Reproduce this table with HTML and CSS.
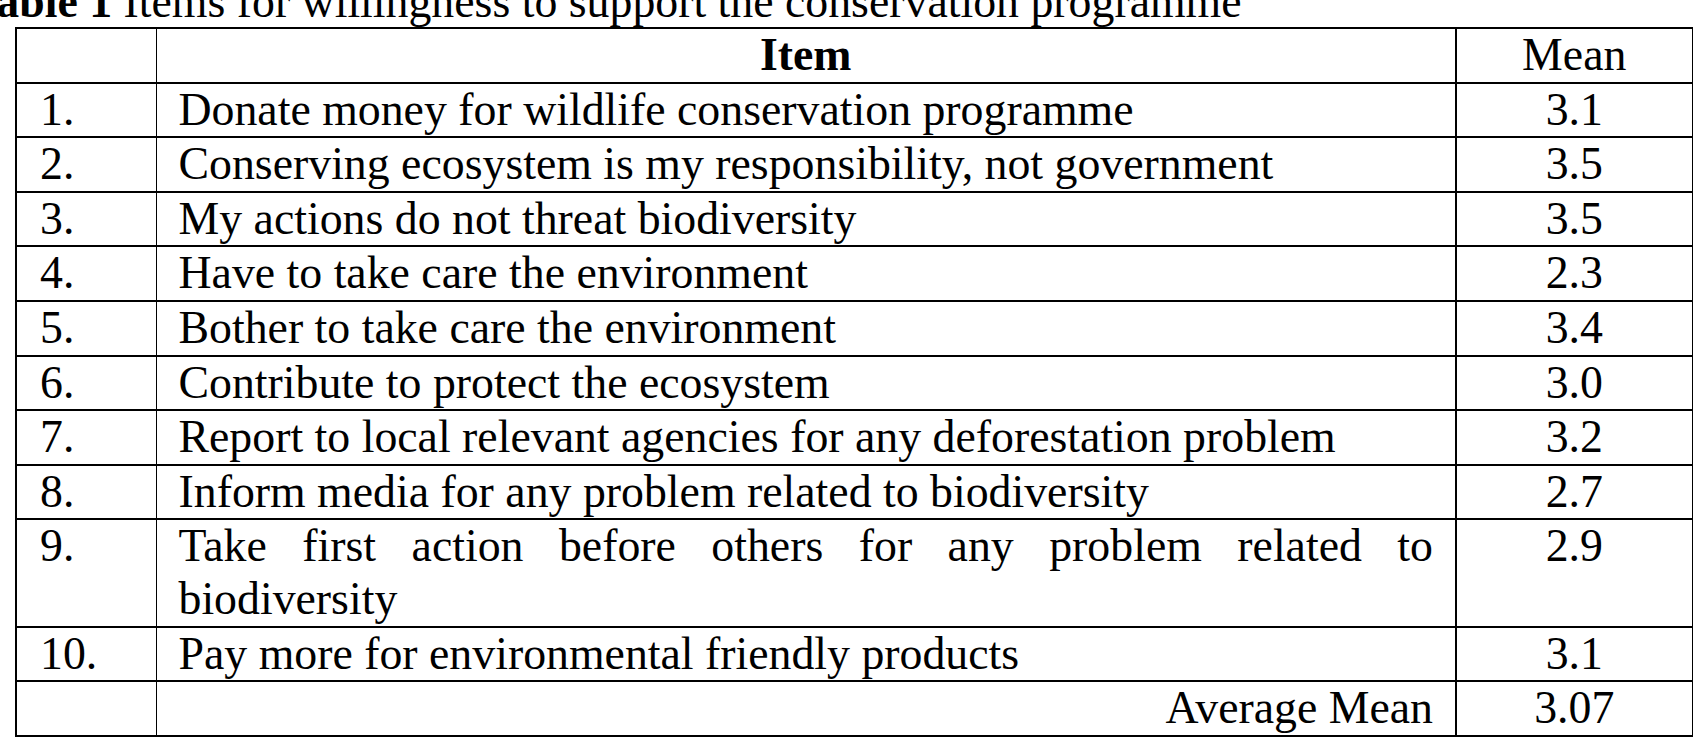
FILE: index.html
```html
<!DOCTYPE html>
<html lang="en">
<head>
<meta charset="utf-8">
<title>Table 1</title>
<link rel="stylesheet" href="styles.css">
</head>
<body>
<div class="caption"><b>Table 1</b> Items for willingness to support the conservation programme</div>
<table class="items">
  <colgroup>
    <col class="c-num">
    <col class="c-item">
    <col class="c-mean">
  </colgroup>
  <tr class="head">
    <td class="num"></td>
    <td class="item center"><b>Item</b></td>
    <td class="mean">Mean</td>
  </tr>
  <tr><td class="num">1.</td><td class="item">Donate money for wildlife conservation programme</td><td class="mean">3.1</td></tr>
  <tr><td class="num">2.</td><td class="item">Conserving ecosystem is my responsibility, not government</td><td class="mean">3.5</td></tr>
  <tr><td class="num">3.</td><td class="item">My actions do not threat biodiversity</td><td class="mean">3.5</td></tr>
  <tr><td class="num">4.</td><td class="item">Have to take care the environment</td><td class="mean">2.3</td></tr>
  <tr><td class="num">5.</td><td class="item">Bother to take care the environment</td><td class="mean">3.4</td></tr>
  <tr><td class="num">6.</td><td class="item">Contribute to protect the ecosystem</td><td class="mean">3.0</td></tr>
  <tr><td class="num">7.</td><td class="item">Report to local relevant agencies for any deforestation problem</td><td class="mean">3.2</td></tr>
  <tr><td class="num">8.</td><td class="item">Inform media for any problem related to biodiversity</td><td class="mean">2.7</td></tr>
  <tr><td class="num">9.</td><td class="item"><span class="justline">Take first action before others for any problem related to</span>biodiversity</td><td class="mean">2.9</td></tr>
  <tr><td class="num">10.</td><td class="item">Pay more for environmental friendly products</td><td class="mean">3.1</td></tr>
  <tr><td class="num"></td><td class="item right">Average Mean</td><td class="mean">3.07</td></tr>
</table>
</body>
</html>
```
FILE: styles.css
```css
html, body {
  margin: 0;
  padding: 0;
  background: #ffffff;
}
body {
  display: flex;
  flex-direction: column;
  align-items: flex-start;
  font-family: "Liberation Serif", "Times New Roman", serif;
  color: #000000;
}
.caption {
  font-size: 45.8px;
  line-height: 26px;
  height: 26px;
  margin-top: -11px;
  margin-left: -30px;
  white-space: nowrap;
}
.items {
  border-collapse: collapse;
  margin-left: 15px;
  margin-top: 12px;
  font-size: 45.8px;
  table-layout: fixed;
  width: 1676px;
}
.c-num { width: 140px; }
.c-item { width: 1300px; }
.c-mean { width: 236px; }
.items td {
  border-top: 2px solid #000;
  border-bottom: 2px solid #000;
  border-left: 2px solid #000;
  border-right: 2px solid #000;
  padding: 0 22px;
  line-height: 52.6px;
  vertical-align: top;
  white-space: nowrap;
}
.items td.num {
  border-right: 1.5px solid #000;
  padding-left: 23px;
}
.items td.item {
  border-left: 1.5px solid #000;
  white-space: normal;
}
.items td.mean {
  text-align: center;
  border-right: 1.5px solid #000;
}
.center { text-align: center; }
.items td.right { text-align: right; }
.justline {
  display: block;
  text-align: justify;
  text-align-last: justify;
}
```
